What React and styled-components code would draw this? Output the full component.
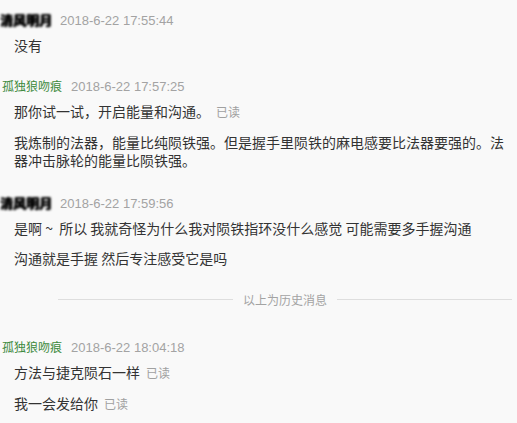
import React from 'react'
import styled, { createGlobalStyle } from 'styled-components'

const GlobalStyle = createGlobalStyle`
  html, body {
    margin: 0;
    padding: 0;
    background: #f9f9f9;
  }
  body {
    font-family: "Noto Sans CJK SC", "Liberation Sans", sans-serif;
  }
`

const Page = styled.div`
  width: 517px;
  min-height: 423px;
  padding-top: 10px;
  box-sizing: border-box;
  background: #f9f9f9;
  overflow: hidden;
`

const Group = styled.div`
  margin-bottom: ${(p) => p.$gap ?? 16}px;
`

const Header = styled.div`
  display: flex;
  align-items: center;
  height: 20px;
  padding-left: ${(p) => (p.$self ? 2 : 0)}px;
`

const Name = styled.span`
  font-size: ${(p) => (p.$self ? 12 : 13)}px;
  line-height: 20px;
  color: ${(p) => (p.$self ? '#3d8a3d' : '#000')};
  filter: ${(p) => (p.$self ? 'none' : 'blur(1.1px)')};
  font-weight: ${(p) => (p.$self ? 'normal' : 'bold')};
  text-shadow: ${(p) => (p.$self ? 'none' : '0 0 1px #000, 1px 0 1px #222')};
  white-space: nowrap;
`

const Time = styled.span`
  font-family: "Liberation Sans", Arial, sans-serif;
  font-size: 13px;
  color: #a3a3a3;
  margin-left: ${(p) => (p.$self ? 9 : 8)}px;
`

const Msg = styled.div`
  font-size: 14px;
  line-height: 18px;
  color: #333;
  padding: 6px 8px 6px 14px;
  white-space: pre-wrap;
`

const Read = styled.span`
  font-size: 12px;
  color: #a0a0a0;
  margin-left: 6px;
`

const Divider = styled.div`
  display: flex;
  align-items: center;
  height: 20px;
  padding: 0 5px 0 58px;
  margin: 8px 0 28px;
  gap: 10px;

  &::before,
  &::after {
    content: '';
    flex: 1;
    height: 1px;
    background: #dedede;
  }
`

const DividerText = styled.span`
  font-size: 12px;
  color: #a3a3a3;
`

const groups = [
  {
    self: false,
    name: '清风明月',
    time: '2018-6-22 17:55:44',
    msgs: [{ text: '没有' }],
  },
  {
    self: true,
    name: '孤独狼吻痕',
    time: '2018-6-22 17:57:25',
    gap: 18,
    msgs: [
      { text: '那你试一试，开启能量和沟通。', read: true },
      {
        text: '我炼制的法器，能量比纯陨铁强。但是握手里陨铁的麻电感要比法器要强的。法器冲击脉轮的能量比陨铁强。',
      },
    ],
  },
  {
    self: false,
    name: '清风明月',
    time: '2018-6-22 17:59:56',
    msgs: [
      { text: '是啊 ~  所以 我就奇怪为什么我对陨铁指环没什么感觉 可能需要多手握沟通' },
      { text: '沟通就是手握 然后专注感受它是吗' },
    ],
  },
]

const lastGroup = {
  self: true,
  name: '孤独狼吻痕',
  time: '2018-6-22 18:04:18',
  msgs: [
    { text: '方法与捷克陨石一样', read: true },
    { text: '我一会发给你', read: true },
  ],
}

function MessageGroup({ group }) {
  return (
    <Group $gap={group.gap}>
      <Header $self={group.self}>
        <Name $self={group.self}>{group.name}</Name>
        <Time $self={group.self}>{group.time}</Time>
      </Header>
      {group.msgs.map((m, i) => (
        <Msg key={i}>
          {m.text}
          {m.read && <Read>已读</Read>}
        </Msg>
      ))}
    </Group>
  )
}

export default function App() {
  return (
    <Page>
      <GlobalStyle />
      {groups.map((g, i) => (
        <MessageGroup group={g} key={i} />
      ))}
      <Divider>
        <DividerText>以上为历史消息</DividerText>
      </Divider>
      <MessageGroup group={lastGroup} />
    </Page>
  )
}
